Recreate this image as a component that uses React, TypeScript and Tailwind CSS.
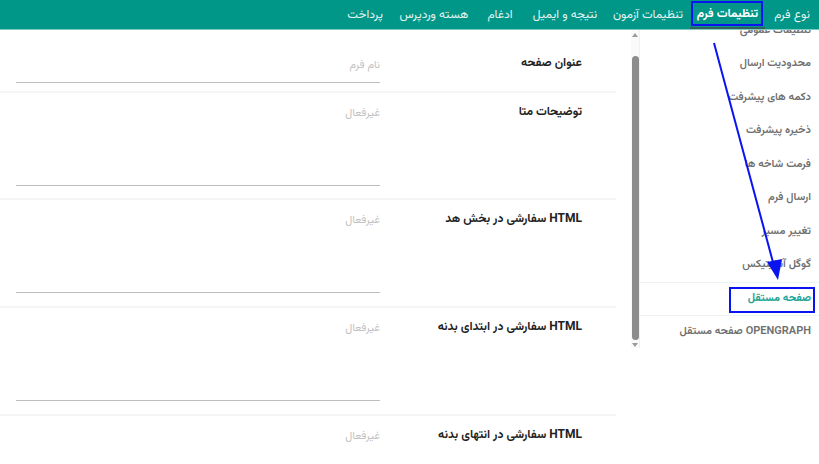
import React from "react";

const FONT = {
  fontFamily: '"Vazirmatn","Noto Sans Arabic","DejaVu Sans","Noto Sans",sans-serif',
};

const tabs: { label: string; w: string; active?: boolean }[] = [
  { label: "نوع فرم", w: "w-[54px]" },
  { label: "تنظیمات فرم", w: "w-[75px]", active: true },
  { label: "تنظیمات آزمون", w: "w-[84px]" },
  { label: "نتیجه و ایمیل", w: "w-[82px]" },
  { label: "ادغام", w: "w-[48px]" },
  { label: "هسته وردپرس", w: "w-[84px]" },
  { label: "پرداخت", w: "w-[54px]" },
];

const sideItems = [
  "تنظیمات عمومی",
  "محدودیت ارسال",
  "دکمه های پیشرفت",
  "ذخیره پیشرفت",
  "فرمت شاخه ها",
  "ارسال فرم",
  "تغییر مسیر",
  "گوگل آنالیتیکس",
  "صفحه مستقل",
  "OPENGRAPH صفحه مستقل",
];

function Separator() {
  return <div className="h-[2px] bg-[#f5f5f5] shrink-0" />;
}

function TextRow({ label, tall }: { label: string; tall?: boolean }) {
  return (
    <div className="flex shrink-0 h-[106px]">
      <div className="w-[236px] pr-[34px] pt-[11px] text-[12px] leading-4 font-bold text-[#222]">
        {label}
      </div>
      <div className="w-[364px] pt-[13px]">
        <div className="h-[80px] border-b border-[#bdbdbd] text-[11px] leading-4 text-[#c2c2c2]">
          غیرفعال
        </div>
      </div>
    </div>
  );
}

export default function App() {
  return (
    <div
      dir="rtl"
      style={FONT}
      className="relative w-[819px] h-[464px] overflow-hidden bg-white"
    >
      {/* header */}
      <div className="h-[30px] bg-[#009688] border-b border-[#7cc9c1] flex pr-0">
        {tabs.map((t) => (
          <div
            key={t.label}
            className={`${t.w} shrink-0 flex items-center justify-center text-[12px] whitespace-nowrap ${
              t.active
                ? "font-bold text-white border-b-2 border-[#34605b]"
                : "text-[#e6f4f2]"
            }`}
          >
            {t.label}
          </div>
        ))}
      </div>

      {/* body */}
      <div className="flex h-[434px]">
        {/* sidebar */}
        <div className="w-[179px] shrink-0 overflow-hidden">
          <div className="-mt-[16px]">
            {sideItems.map((s) => {
              const active = s === "صفحه مستقل";
              return (
                <div
                  key={s}
                  className={`h-[33.5px] flex items-center pr-[8px] text-[11px] whitespace-nowrap ${
                    active
                      ? "font-bold text-[#1fa396] border-y border-[#edf4f3]"
                      : "font-semibold text-[#6f6f6f]"
                  }`}
                >
                  {s}
                </div>
              );
            })}
          </div>
        </div>

        {/* scrollbar */}
        <div className="w-[9px] shrink-0 h-[318px] bg-[#fafafa] border-r border-[#f0f0f0] flex flex-col items-center">
          <div className="mt-[3px] w-0 h-0 border-l-[3px] border-r-[3px] border-b-[4px] border-l-transparent border-r-transparent border-b-[#9a9a9a]" />
          <div className="mt-[19px] w-[7px] h-[284px] rounded-full bg-[#8c8c8c]" />
          <div className="mt-[3px] w-0 h-0 border-l-[3px] border-r-[3px] border-t-[4px] border-l-transparent border-r-transparent border-t-[#9a9a9a]" />
        </div>

        <div className="w-[15px] shrink-0" />

        {/* content */}
        <div className="w-[616px] shrink-0 flex flex-col">
          <div className="flex shrink-0 h-[61px]">
            <div className="w-[236px] pr-[34px] pt-[25px] text-[12px] leading-4 font-bold text-[#222]">
              عنوان صفحه
            </div>
            <div className="w-[364px] pt-[28px]">
              <div className="h-[25px] border-b border-[#bdbdbd] text-[11px] leading-4 text-[#c2c2c2]">
                نام فرم
              </div>
            </div>
          </div>
          <Separator />
          <div className="flex shrink-0 h-[105px]">
            <div className="w-[236px] pr-[34px] pt-[11px] text-[12px] leading-4 font-bold text-[#222]">
              توضیحات متا
            </div>
            <div className="w-[364px] pt-[13px]">
              <div className="h-[80px] border-b border-[#bdbdbd] text-[11px] leading-4 text-[#c2c2c2]">
                غیرفعال
              </div>
            </div>
          </div>
          <Separator />
          <TextRow label="HTML سفارشی در بخش هد" />
          <Separator />
          <TextRow label="HTML سفارشی در ابتدای بدنه" />
          <Separator />
          <TextRow label="HTML سفارشی در انتهای بدنه" />
        </div>
      </div>

      {/* annotations */}
      <svg
        className="absolute inset-0 pointer-events-none"
        width="819"
        height="464"
        viewBox="0 0 819 464"
      >
        <rect x="692" y="2" width="70" height="23" fill="none" stroke="#0a14f0" strokeWidth="2" />
        <rect x="730" y="288" width="84" height="24" fill="none" stroke="#0a14f0" strokeWidth="2" />
        <line x1="714" y1="43" x2="774" y2="266" stroke="#0a14f0" strokeWidth="2" />
        <polygon points="778,280 767,262 782,259" fill="#0a14f0" />
      </svg>
    </div>
  );
}
